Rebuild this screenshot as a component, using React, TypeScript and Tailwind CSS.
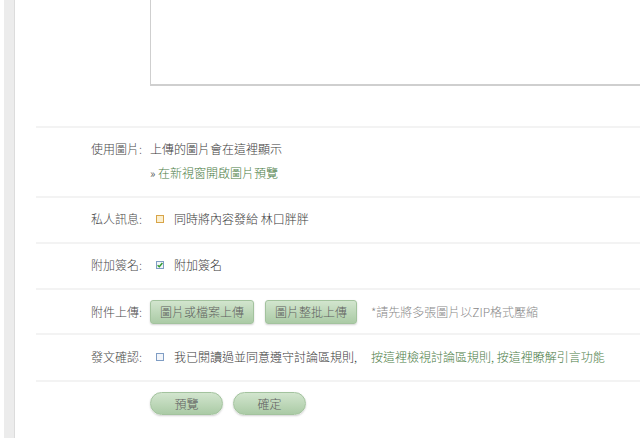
const font = { fontFamily: '"Noto Sans CJK TC", "Noto Sans", sans-serif' };

function Label({ children }: { children: React.ReactNode }) {
  return <div className="w-[114px] shrink-0 pr-[8px] text-right leading-[24px] text-[#4a4a4a]">{children}</div>;
}

function Row({ children, className = '' }: { children: React.ReactNode; className?: string }) {
  return <div className={`flex border-t-2 border-[#f3f3f3] ${className}`}>{children}</div>;
}

function Box({ tone }: { tone: 'orange' | 'checked' | 'blue' }) {
  const border = tone === 'orange' ? 'border-[#d8a449] bg-[#fbefcf]' : 'border-[#7f9dc4] bg-[#f2f5fa]';
  return (
    <span className={`ml-[6px] mr-[10px] flex h-[8px] w-[8px] items-center justify-center border ${border}`}>
      {tone === 'checked' && (
        <svg width="6" height="6" viewBox="0 0 6 6">
          <path d="M0.6 3.2 L2.3 4.8 L5.4 1" fill="none" stroke="#2f9a2f" strokeWidth="1.4" />
        </svg>
      )}
    </span>
  );
}

function GreenButton({ children, pill = false }: { children: React.ReactNode; pill?: boolean }) {
  return (
    <button
      className={`border border-[#a3c39e] bg-gradient-to-b from-[#d2e5ce] to-[#abcba6] text-[12px] font-light text-[#5f5f5f] shadow-[0_1px_2px_rgba(0,0,0,0.18)] ${
        pill ? 'h-[23px] w-[73px] rounded-full' : 'h-[24px] rounded-[3px] px-[9px]'
      }`}
    >
      {children}
    </button>
  );
}

export default function App() {
  return (
    <div className="flex min-h-[438px] overflow-hidden bg-white text-[12px] font-light" style={font}>
      <div className="w-[4px] shrink-0" />
      <div className="w-[11px] shrink-0 border-r border-[#dcdcdc] bg-[#ececec]" />
      <div className="min-w-0 flex-1 pl-[21px]">
        {/* message body */}
        <div className="flex pb-[40px]">
          <div className="w-[114px] shrink-0" />
          <div className="h-[86px] w-[600px] shrink-0 border-b-2 border-l border-[#cfcfcf] bg-white" />
        </div>

        <Row className="pt-[9px] pb-[11px]">
          <Label>使用圖片:</Label>
          <div className="leading-[24px]">
            <div className="text-[#3a3a3a]">上傳的圖片會在這裡顯示</div>
            <div>
              <span className="text-[#444]">»</span>{' '}
              <a className="text-[#4a7c45]">在新視窗開啟圖片預覽</a>
            </div>
          </div>
        </Row>

        <Row className="pt-[9px] pb-[11px]">
          <Label>私人訊息:</Label>
          <div className="flex items-center leading-[24px] text-[#3a3a3a]">
            <Box tone="orange" />
            同時將內容發給 林口胖胖
          </div>
        </Row>

        <Row className="pt-[9px] pb-[11px]">
          <Label>附加簽名:</Label>
          <div className="flex items-center leading-[24px] text-[#3a3a3a]">
            <Box tone="checked" />
            附加簽名
          </div>
        </Row>

        <Row className="pt-[10px] pb-[9px]">
          <Label>附件上傳:</Label>
          <div className="flex items-center gap-[11px]">
            <GreenButton>圖片或檔案上傳</GreenButton>
            <GreenButton>圖片整批上傳</GreenButton>
            <span className="ml-[3px] whitespace-nowrap text-[#888]">*請先將多張圖片以ZIP格式壓縮</span>
          </div>
        </Row>

        <Row className="pt-[10px] pb-[11px]">
          <Label>發文確認:</Label>
          <div className="flex items-center whitespace-nowrap leading-[24px] text-[#3a3a3a]">
            <Box tone="blue" />
            我已閱讀過並同意遵守討論區規則,
            <a className="ml-[14px] text-[#4a7c45]">按這裡檢視討論區規則, 按這裡瞭解引言功能</a>
          </div>
        </Row>

        <div className="flex border-t-2 border-[#f3f3f3] pt-[10px]">
          <div className="w-[114px] shrink-0" />
          <div className="flex gap-[10px]">
            <GreenButton pill>預覽</GreenButton>
            <GreenButton pill>確定</GreenButton>
          </div>
        </div>
      </div>
    </div>
  );
}
